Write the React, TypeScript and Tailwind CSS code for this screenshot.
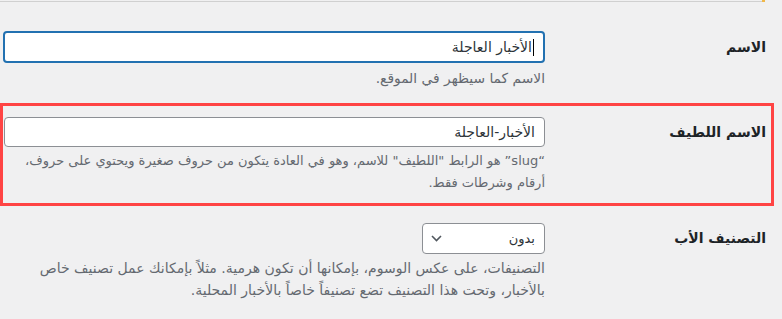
const font = { fontFamily: '"DejaVu Sans", Tahoma, sans-serif' };

export default function App() {
  return (
    <div dir="rtl" style={font} className="h-[319px] w-[782px] overflow-hidden bg-[#f0f0f1] text-[#1d2327]">
      {/* bottom edge of the box above */}
      <div dir="ltr" className="flex h-[2px]">
        <div className="w-[762px] border-b border-[#d0d0d0]" />
        <div className="h-[2px] w-[3px] bg-[#f0b849]" />
      </div>

      {/* name */}
      <div className="flex pt-[29px] pb-[14px]">
        <div className="flex h-[32px] flex-1 items-center pr-[16px] text-[14px] font-bold">الاسم</div>
        <div className="ml-[3px] w-[542px]">
          <div className="flex h-[32px] items-center rounded-[4px] border-2 border-[#2271b1] bg-white pr-[9px] text-[14px] text-[#2c3338]">
            <span className="h-[17px] w-px bg-black" />
            <span className="mr-[1px]">الأخبار العاجلة</span>
          </div>
          <p className="mt-[4px] whitespace-nowrap text-[13.8px] leading-[22px] text-[#646970]">الاسم كما سيظهر في الموقع.</p>
        </div>
      </div>

      {/* slug, highlighted */}
      <div className="mr-[8px] border-[3px] border-[#ff4444]">
        <div className="flex pt-[11px] pb-[9px]">
          <div className="flex h-[30px] flex-1 items-center pr-[5px] text-[14px] font-bold">الاسم اللطيف</div>
          <div className="ml-[1px] w-[541px]">
            <div className="flex h-[30px] items-center rounded-[4px] border border-[#8c8f94] bg-white pr-[9px] text-[14px] text-[#2c3338]">
              الأخبار-العاجلة
            </div>
            <p className="mt-[3px] whitespace-nowrap text-[13px] leading-[22px] text-[#646970]">
              “slug” هو الرابط "اللطيف" للاسم، وهو في العادة يتكون من حروف صغيرة ويحتوي على حروف،
              <br />
              أرقام وشرطات فقط.
            </p>
          </div>
        </div>
      </div>

      {/* parent */}
      <div className="flex pt-[17px]">
        <div className="flex h-[31px] flex-1 items-center pr-[16px] text-[14px] font-bold">التصنيف الأب</div>
        <div className="ml-[3px] w-[542px]">
          <div className="flex h-[31px] w-[123px] items-center justify-between rounded-[4px] border border-[#8c8f94] bg-white pr-[9px] pl-[8px] text-[13px] text-[#2c3338]">
            <span>بدون</span>
            <svg width="11" height="7" viewBox="0 0 11 7" fill="none">
              <path d="M1 1l4.5 4.5L10 1" stroke="#50575e" strokeWidth="1.6" />
            </svg>
          </div>
          <p className="mt-[3px] whitespace-nowrap text-[14px] leading-[22px] text-[#646970]">
            التصنيفات، على عكس الوسوم، بإمكانها أن تكون هرمية. مثلاً بإمكانك عمل تصنيف خاص
            <br />
            بالأخبار، وتحت هذا التصنيف تضع تصنيفاً خاصاً بالأخبار المحلية.
          </p>
        </div>
      </div>
    </div>
  );
}
